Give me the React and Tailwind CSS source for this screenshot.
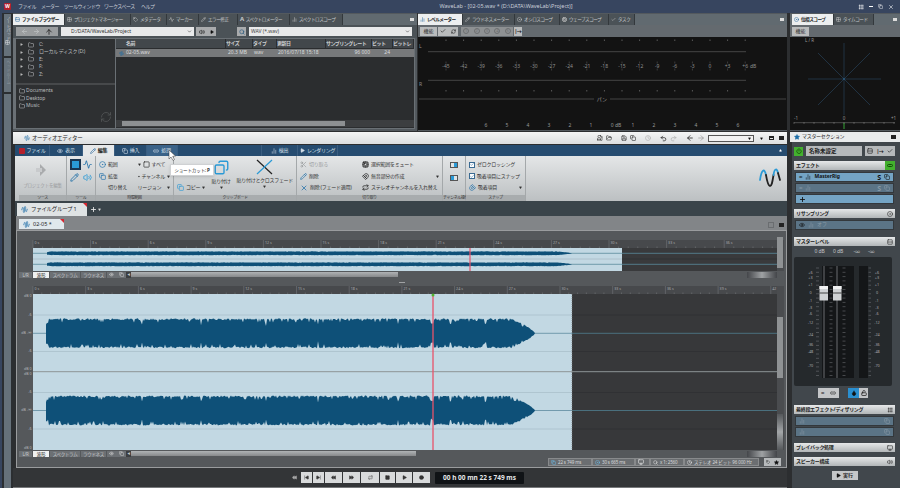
import React from 'react';
import {
  ArrowLeft, ArrowRight, ArrowUp, Folder, Volume2, Play, Search, ChevronDown, Undo2, Redo2, Plus, Star, Power,
  SkipBack, SkipForward, Rewind, FastForward, Square, Circle, Repeat, Copy, Scissors, X, Eye, Check, RefreshCw,
  Pencil, Monitor, Unlock, Grid2x2, BarChart2, FileAudio, Save, FolderOpen, Magnet, Tag, Activity, AudioWaveform,
  Clock, Cpu, Droplet, Link2, Rows2, ChartNoAxesColumn, Grip, CircleDot,
} from 'lucide-react';

// seeded noise so the waveforms stay the same on every load
const rng = (seed) => () => {
  seed = (seed * 16807) % 2147483647;
  return seed / 2147483647;
};

const makeWave = (cx, x0, x1, fadeAt, amp, seed, dips = []) => {
  const r = rng(seed);
  const top = [];
  const bottom = [];
  const edge = () => {
    const v = r();
    if (v < 0.12) return 0.7 + r() * 0.14;
    return 0.88 + r() * 0.12;
  };
  for (let x = x0; x <= x1; x += 1) {
    let env = x < x0 + 3 ? 0.75 : 1;
    if (x > fadeAt) env = Math.pow(1 - (x - fadeAt) / (x1 - fadeAt), 0.7);
    if (dips.includes(x)) env *= 0.66;
    top.push(`${x},${(cx - amp * env * edge()).toFixed(1)}`);
    bottom.unshift(`${x},${(cx + amp * env * edge()).toFixed(1)}`);
  }
  return `M${top.join(' L')} L${bottom.join(' L')} Z`;
};

const mainDips = [431, 432, 433, 450, 451, 485, 486, 142, 201, 266, 318, 398];
const mainTop = makeWave(333.3, 46, 535, 511, 15, 4711, mainDips);
const mainBottom = makeWave(410.5, 46, 535, 511, 15, 991, mainDips);
const overTop = makeWave(253.3, 47, 572, 556, 2, 77);
const overBottom = makeWave(264.3, 47, 572, 556, 2, 123);

const range = (n) => Array.from({ length: n }, (_, i) => i);

const Tab = ({ label, active, w, icon }) => (
  <div
    className={`flex items-center gap-[2px] h-[11px] px-[2px] text-[4.6px] tracking-[-0.5px] whitespace-nowrap border-r border-[#33383c] ${
      active ? 'bg-[#eceeef] text-[#222] font-bold' : 'bg-[#4b5257] text-[#c3c7ca]'
    } ${w}`}
  >
    {icon}
    <span>{label}</span>
  </div>
);

const Ic = ({ as: Icon, s = 6, c = 'text-[#333]', fill }) => (
  <Icon size={s} strokeWidth={2.2} className={`${c} shrink-0`} fill={fill || 'none'} />
);

const Menu = () => (
  <div className="h-[13px] flex items-center bg-[#37455f] text-[#c8ced8] text-[5px] shrink-0">
    <div className="ml-[4px] w-[7px] h-[7px] rounded-[1px] bg-[#b3202c] text-white text-[5px] leading-[7px] text-center font-bold">W</div>
    <div className="ml-[7px] flex gap-[6px] tracking-[-0.5px] whitespace-nowrap">
      <span className="w-[17px]">ファイル</span>
      <span className="w-[17px]">メーター</span>
      <span className="w-[34px]">ツールウィンドウ</span>
      <span className="w-[31px]">ワークスペース</span>
      <span>ヘルプ</span>
    </div>
    <span className="ml-[285px] text-[5.5px] whitespace-nowrap">WaveLab - [02-05.wav * (D:\DATA\WaveLab\Project)]</span>
    <div className="ml-auto mr-[6px] flex gap-[5px] items-center text-white">
      <Ic as={Grip} c="text-white" s={6} />
      <div className="w-[4px] h-[1px] bg-white" />
      <Ic as={Copy} c="text-white" s={5} />
      <Ic as={X} c="text-white" s={6} />
    </div>
  </div>
);

const LeftStrip = () => (
  <div className="w-[13px] shrink-0 flex flex-col bg-[#2b2e31] pl-[2px] pr-[2px] border-l-2 border-[#37455f]">
    <div className="h-[42px] mt-[1px] bg-[#66717a] flex flex-col items-center pt-[2px] text-[#c9ced2]">
      <span className="[writing-mode:vertical-rl] text-[4px] h-[24px] overflow-hidden">ノートパッド</span>
      <Ic as={Grid2x2} s={5} c="text-[#e4e6e8]" />
    </div>
    <div className="h-[34px] mt-[2px] bg-[#66717a] flex flex-col items-center pt-[2px] text-[#8b959c]">
      <span className="[writing-mode:vertical-rl] text-[4px] h-[24px] overflow-hidden">ヘッドルーム</span>
    </div>
    <div className="flex-1 mt-[2px] bg-[#66717a]" />
  </div>
);

const treeRows = ['C:', 'ローカル ディスク (D:)', 'E:', 'F:', 'Z:'];
const favRows = ['Documents', 'Desktop', 'Music'];
const cols = [
  ['名前', 'w-[110px] pl-[10px]'],
  ['サイズ', 'w-[27px]'],
  ['タイプ', 'w-[24px]'],
  ['更新日', 'w-[49px]'],
  ['サンプリングレート', 'w-[46px]'],
  ['ビット', 'w-[21px]'],
  ['ビットレ', 'w-[21px]'],
];

const FileBrowser = () => (
  <div className="w-[404px] shrink-0 flex flex-col bg-[#53595e]">
    <div className="flex h-[11px] mt-px bg-[#616a70] shrink-0">
      <Tab active w="w-[52px]" label="ファイルブラウザー" icon={<Ic as={Rows2} s={5} c="text-[#1d5f96]" />} />
      <Tab w="w-[66px]" label="プロジェクトマネージャー" icon={<Ic as={Grid2x2} s={5} c="text-[#ccc]" />} />
      <Tab w="w-[36px]" label="メタデータ" icon={<Ic as={Tag} s={5} c="text-[#ccc]" />} />
      <Tab w="w-[32px]" label="マーカー" icon={<Ic as={Activity} s={5} c="text-[#ccc]" />} />
      <Tab w="w-[39px]" label="エラー修正" icon={<Ic as={Pencil} s={5} c="text-[#ccc]" />} />
      <Tab w="w-[52px]" label="スペクトロメーター" icon={<span className="text-[6px] font-bold">A</span>} />
      <Tab w="w-[53px]" label="スペクトロスコープ" icon={<Ic as={ChartNoAxesColumn} s={5} c="text-[#ccc]" />} />
      <div className="flex-1 flex justify-end items-center pr-[3px]">
        <div className="w-[4px] h-[3px] bg-[#ddd]" />
      </div>
    </div>
    <div className="h-[13px] flex items-center bg-[#4b5257] pl-[3px] shrink-0">
      <div className="w-[42px] h-[9px] bg-[#9a9d9f] flex items-center justify-around px-[2px]">
        <Ic as={ArrowLeft} s={7} c="text-[#c4c6c8]" />
        <Ic as={ArrowRight} s={7} c="text-[#c4c6c8]" />
        <Ic as={ArrowUp} s={8} c="text-[#111]" />
      </div>
      <div className="ml-[3px] w-[133px] h-[9px] bg-[#e8e9ea] flex items-center pl-[10px] pr-[2px] text-[5px] text-[#333]">
        D:/DATA/WaveLab/Project
        <Ic as={ChevronDown} s={5} c="ml-auto text-[#111]" />
      </div>
      <div className="ml-[2px] w-[20px] h-[9px] bg-[#a9abad] flex items-center justify-around">
        <Ic as={Volume2} s={6} c="text-[#111]" />
        <Ic as={Play} s={4} c="text-[#111]" fill="#111" />
      </div>
      <div className="ml-[21px] w-[9px] h-[9px] bg-[#a9abad] flex items-center justify-center">
        <Ic as={Search} s={6} c="text-[#1a4e78]" />
      </div>
      <div className="ml-[3px] w-[163px] h-[9px] bg-[#e8e9ea] flex items-center pl-[2px] pr-[2px] text-[5px] text-[#444]">
        WAV (*.wav)
        <Ic as={ChevronDown} s={5} c="ml-auto text-[#111]" />
      </div>
    </div>
    <div className="flex-1 flex p-[1px] pl-[3px] bg-[#6a7075] gap-px mb-[2px] mr-[2px]">
      <div className="w-[100px] flex flex-col text-[5px] text-[#b9bcbe]">
        <div className="h-[44px] bg-[#2e3032] pt-[2px]">
          {treeRows.map((t) => (
            <div key={t} className="h-[7.4px] flex items-center pl-[4px] gap-[5px]">
              <Play size={3} fill="#bbb" className="text-[#bbb]" />
              <Ic as={Folder} s={6} c="text-[#b9bcbe]" />
              <span className="whitespace-nowrap tracking-[-0.3px]">{t}</span>
            </div>
          ))}
        </div>
        <div className="h-[2px] bg-[#47494b]" />
        <div className="flex-1 bg-[#2e3032] pt-[2px] relative">
          {favRows.map((t) => (
            <div key={t} className="h-[7.5px] flex items-center pl-[3px] gap-[1px]">
              <Ic as={Folder} s={6} c="text-[#b9bcbe]" />
              <span>{t}</span>
            </div>
          ))}
          <RefreshCw size={12} strokeWidth={1.5} className="absolute right-[3px] bottom-[5px] text-[#55585a]" />
        </div>
      </div>
      <div className="flex-1 flex flex-col bg-[#2b2d2f] text-[5px] text-[#cfd1d3]">
        <div className="h-[9px] flex bg-[#42474b] font-bold shrink-0 tracking-[-0.5px]">
          {cols.map(([c, w]) => (
            <div key={c} className={`${w} border-r border-[#2b2d2f] whitespace-nowrap flex items-center`}>{c}</div>
          ))}
        </div>
        <div className="h-[8px] mt-px flex items-center bg-[#77797b] shrink-0 text-[#dcdedf]">
          <div className="w-[110px] pl-[3px] flex items-center gap-[2px]">
            <Ic as={AudioWaveform} s={5} c="text-[#1e6ea8]" />
            02-05.wav
          </div>
          <div className="w-[27px] pl-[2px]">20.3 MB</div>
          <div className="w-[24px] pl-px">wav</div>
          <div className="w-[49px] pl-px whitespace-nowrap">2016/07/18 15:18</div>
          <div className="w-[44px] text-right">96 000</div>
          <div className="w-[20px] text-right">24</div>
        </div>
        <div className="flex-1" />
        <div className="h-[7px] mb-px flex items-center bg-[#3c3e40] px-[6px]">
          <div className="w-[223px] h-[5px] bg-[#8d9092]" />
        </div>
      </div>
    </div>
  </div>
);

const meterMarks = ['-45', '-42', '-39', '-36', '-33', '-30', '-27', '-24', '-21', '-18', '-15', '-12', '-9', '-6', '-3', '0', '+3', '+6'];
const panLeft = [[486, '6'], [507, '5'], [528, '4'], [549, '3'], [570, '2'], [591, '1'], [616, '0 dB'], [633, '1'], [654, '2'], [675, '3'], [696, '4'], [717, '5'], [738, '6']];

const LevelMeter = () => (
  <div className="w-[369px] shrink-0 ml-px flex flex-col bg-[#53595e]">
    <div className="flex h-[11px] mt-px bg-[#616a70] shrink-0">
      <Tab active w="w-[45px]" label="レベルメーター" icon={<Ic as={ChartNoAxesColumn} s={5} c="text-[#1d5f96]" />} />
      <Tab w="w-[52px]" label="ラウドネスメーター" icon={<Ic as={Pencil} s={5} c="text-[#ccc]" />} />
      <Tab w="w-[45px]" label="オシロスコープ" icon={<Ic as={CircleDot} s={5} c="text-[#ccc]" />} />
      <Tab w="w-[49px]" label="ウェーブスコープ" icon={<Ic as={Cpu} s={5} c="text-[#ccc]" />} />
      <Tab w="w-[26px]" label="タスク" icon={<Ic as={Check} s={5} c="text-[#ccc]" />} />
      <div className="flex-1 flex justify-end items-center pr-[3px]">
        <div className="w-[4px] h-[3px] bg-[#ddd]" />
      </div>
    </div>
    <div className="h-[12px] flex items-center bg-[#646a6f] pl-[2px] gap-px shrink-0">
      <div className="h-[9px] w-[17px] bg-[#b9bbbc] text-[#333] text-[5px] leading-[9px] text-center">機能</div>
      <div className="h-[9px] w-[20px] bg-[#b9bbbc] flex items-center justify-around">
        <Ic as={Check} s={6} c="text-[#111]" />
        <Ic as={RefreshCw} s={5} c="text-[#111]" />
      </div>
      <div className="ml-[2px] h-[9px] w-[52px] bg-[#8e9193] flex items-center justify-around text-[5px] text-[#6d6f71]">
        {['1', '2', '3', '4', '5'].map((n) => (
          <span key={n} className="w-[6px] h-[6px] rounded-full border border-[#6d6f71] flex items-center justify-center text-[4px]">{n}</span>
        ))}
      </div>
      <div className="h-[9px] w-[8px] bg-[#b9bbbc] flex items-center justify-center text-[#111] text-[5px] font-bold leading-none tracking-[-0.5px]">|→</div>
    </div>
    <svg viewBox="418 37 369 93" className="w-[369px] h-[93px] shrink-0 bg-[#131313]">
      {meterMarks.map((m, i) => {
        const x = 446 + i * 17.6;
        return (
          <g key={m}>
            <line x1={x} x2={x} y1="39.5" y2="41" stroke="#8a8a8a" strokeWidth="0.6" />
            <line x1={x} x2={x} y1="90" y2="91.5" stroke="#8a8a8a" strokeWidth="0.6" />
            <line x1={x} x2={x} y1="61.5" y2="63.5" stroke="#666" strokeWidth="0.5" />
            <line x1={x} x2={x} y1="68.5" y2="70.5" stroke="#666" strokeWidth="0.5" />
            <text x={x} y="67.5" textAnchor="middle" fontSize="5" fill="#8f8f8f">{m}</text>
          </g>
        );
      })}
      <text x="750" y="67.5" fontSize="5" fill="#8f8f8f">dB</text>
      <text x="419" y="48" fontSize="5" fill="#8f8f8f">L</text>
      <text x="419" y="86" fontSize="5" fill="#8f8f8f">R</text>
      <line x1="428" x2="746" y1="51.7" y2="51.7" stroke="#5a5a5a" strokeWidth="0.7" />
      <line x1="428" x2="746" y1="80.3" y2="80.3" stroke="#5a5a5a" strokeWidth="0.7" />
      <line x1="419" x2="594" y1="99" y2="99" stroke="#5a5a5a" strokeWidth="0.7" />
      <line x1="610" x2="786" y1="99" y2="99" stroke="#5a5a5a" strokeWidth="0.7" />
      <text x="602" y="101" textAnchor="middle" fontSize="5" fill="#9a9a9a">パン</text>
      {panLeft.map(([x, t]) => (
        <text key={x} x={x} y="127" textAnchor="middle" fontSize="5" fill="#9a9a9a">{t}</text>
      ))}
    </svg>
  </div>
);

const PhaseScope = () => (
  <div className="w-[110px] shrink-0 ml-[3px] flex flex-col bg-[#53595e]">
    <div className="flex h-[11px] mt-px bg-[#616a70] pl-[2px] shrink-0">
      <Tab active w="w-[42px]" label="位相スコープ" icon={<Ic as={CircleDot} s={5} c="text-[#1d5f96]" />} />
      <Tab w="w-[40px]" label="タイムコード" icon={<Ic as={Grid2x2} s={5} c="text-[#ccc]" />} />
      <div className="flex-1 flex justify-end items-center pr-[3px]">
        <div className="w-[4px] h-[3px] bg-[#ddd]" />
      </div>
    </div>
    <div className="h-[12px] flex items-center bg-[#646a6f] pl-[2px] shrink-0">
      <div className="h-[9px] w-[17px] bg-[#b9bbbc] text-[#333] text-[5px] leading-[9px] text-center">機能</div>
    </div>
    <svg viewBox="790 37 110 93" className="w-[110px] h-[93px] shrink-0 bg-[#131313]">
      <text x="805" y="42" fontSize="4.5" fill="#9a9a9a">L / R</text>
      <g stroke="#274058" strokeWidth="0.7">
        <line x1="844" x2="844" y1="43" y2="115" />
        <line x1="808" x2="881" y1="79" y2="79" />
        <line x1="818" x2="870" y1="53" y2="105" />
        <line x1="870" x2="818" y1="53" y2="105" />
      </g>
      <circle cx="844" cy="79" r="1" fill="#2a5a80" />
      <text x="794" y="120" fontSize="4.5" fill="#9a9a9a">-1</text>
      <text x="844" y="120" fontSize="4.5" fill="#9a9a9a" textAnchor="middle">0</text>
      <text x="891" y="120" fontSize="4.5" fill="#9a9a9a">+1</text>
      <line x1="794" x2="895" y1="122.7" y2="122.7" stroke="#777" strokeWidth="0.6" />
      {range(11).map((i) => (
        <line key={i} x1={794 + i * 10} x2={794 + i * 10} y1="122" y2="124" stroke="#888" strokeWidth="0.5" />
      ))}
      <line x1="844" x2="844" y1="123" y2="129" stroke="#3ab53a" strokeWidth="0.9" />
    </svg>
  </div>
);

const RibbonTab = ({ icon, label, active, hover, w }) => (
  <div
    className={`h-[11px] flex items-center justify-center gap-[2px] text-[5px] tracking-[-0.3px] whitespace-nowrap border-r border-[#3a5d80] ${w} ${
      active ? 'bg-[#e6e8e9] text-[#222] font-bold' : hover ? 'bg-[#3a6288] text-[#d6e0ea]' : 'text-[#d6e0ea]'
    }`}
  >
    {icon}
    {label}
  </div>
);

const Row = ({ icon, label, className = '', arrow }) => (
  <div className={`h-[11.5px] flex items-center gap-[2px] text-[5px] tracking-[-0.25px] whitespace-nowrap ${className}`}>
    {icon}
    {label}
    {arrow && <Ic as={Play} s={3} c="ml-auto rotate-90 text-[#333]" fill="#333" />}
  </div>
);

const Group = ({ w, label, children, className = '' }) => (
  <div className={`${w} shrink-0 flex flex-col border-r border-[#a4a8aa]`}>
    <div className={`flex-1 pt-[3px] px-[3px] ${className}`}>{children}</div>
    <div className="h-[6px] bg-[#a8acae] text-[#333] text-[4px] tracking-[-0.4px] whitespace-nowrap leading-[6px] text-center">{label}</div>
  </div>
);

const TitleIcons = () => (
  <div className="ml-auto mr-[3px] flex items-center gap-[3px]">
    <Ic as={FileAudio} s={6} c="text-[#222]" />
    <Ic as={FolderOpen} s={6} c="text-[#222]" />
    <div className="w-[3px]" />
    <Ic as={Save} s={6} c="text-[#222]" />
    <Ic as={Copy} s={6} c="text-[#222]" />
    <div className="w-[3px]" />
    <Ic as={Clock} s={6} c="text-[#aaa]" />
    <div className="w-[3px]" />
    <Ic as={Undo2} s={7} c="text-[#111]" />
    <Ic as={Redo2} s={7} c="text-[#aaa]" />
    <div className="w-[3px]" />
    <Ic as={ArrowLeft} s={8} c="text-[#111]" />
    <Ic as={ArrowRight} s={8} c="text-[#999]" />
    <div className="w-[46px] h-[7px] bg-[#f2f2f2] border border-[#555] flex justify-end items-center pr-[2px]">
      <Play size={3} fill="#111" className="rotate-90 text-[#111]" />
    </div>
    <Play size={3} fill="#111" className="mx-[3px] rotate-90 text-[#111]" />
    <div className="w-[5px] h-[4px] border border-[#222] border-t-2" />
    <div className="ml-[2px] w-[5px] h-[4px] bg-[#222]" />
  </div>
);

const Ribbon = () => (
  <div className="h-[45px] flex bg-gradient-to-b from-[#e4e6e7] to-[#bcc0c2] text-[#333] relative shrink-0">
    <div className="w-[4px] shrink-0" />
    <Group w="w-[48px]" label="ソース" className="flex flex-col items-center text-[#9a9c9e]">
      <svg width="16" height="14" viewBox="0 0 16 14" className="mt-[4px]">
        <path d="M5 1 L11 7 L5 13 Z" fill="#a9abad" />
        <path d="M1 5 H7 V9 H1 Z" fill="#c8cacc" />
      </svg>
      <span className="mt-[5px] text-[4.5px] tracking-[-0.2px] whitespace-nowrap">プロジェクトを編集</span>
    </Group>
    <Group w="w-[29px]" label="ツール" className="grid grid-cols-2 gap-[1px] content-start">
      <div className="w-[11px] h-[11px] bg-[#2a9ad6] border-[2px] border-[#1a3550]" />
      <Ic as={Activity} s={9} c="text-[#1d6ea8] ml-[1px] mt-px" />
      <Ic as={Pencil} s={9} c="text-[#1d6ea8] mt-[2px]" />
      <Ic as={Volume2} s={9} c="text-[#2a9ad6] ml-[1px] mt-[2px]" />
    </Group>
    <Group w="w-[78px]" label="時間範囲" className="grid grid-cols-2 gap-x-[6px] content-start">
      <Row icon={<Ic as={CircleDot} s={7} c="text-[#1d6ea8]" />} label="範囲" />
      <Row icon={<><Play size={3} fill="#333" className="rotate-90" /><Ic as={Square} s={7} c="text-[#222]" /></>} label="すべて" />
      <Row icon={<Ic as={Copy} s={7} c="text-[#1d6ea8]" />} label="拡張" />
      <Row icon={<Play size={3} fill="#333" className="rotate-90" />} label="チャンネル" arrow />
      <Row label="切り替え" className="pl-[9px]" />
      <Row label="リージョン" arrow />
    </Group>
    <Group w="w-[123px]" label="クリップボード" className="flex gap-[4px]">
      <div className="w-[38px] pt-[23px]">
        <Row icon={<Ic as={Copy} s={7} c="text-[#2a9ad6]" />} label="コピー" arrow />
      </div>
      <div className="w-[31px] flex flex-col items-center">
        <Ic as={Copy} s={15} c="text-[#2a9ad6] mt-[1px] -scale-x-100" />
        <span className="mt-[3px] text-[5px] tracking-[-0.3px] whitespace-nowrap">貼り付け</span>
        <Play size={3} fill="#333" className="rotate-90" />
      </div>
      <div className="flex-1 flex flex-col items-center">
        <svg width="17" height="16" viewBox="0 0 17 16">
          <line x1="1" y1="1" x2="16" y2="15" stroke="#222" strokeWidth="1.2" />
          <line x1="16" y1="1" x2="1" y2="15" stroke="#2a9ad6" strokeWidth="1.2" />
        </svg>
        <span className="mt-[2px] text-[5px] tracking-[-0.3px] whitespace-nowrap">貼り付けとクロスフェード</span>
        <Play size={3} fill="#333" className="rotate-90" />
      </div>
    </Group>
    <Group w="w-[146px]" label="切り取り" className="grid grid-cols-[62px_1fr] content-start">
      <Row className="text-[#9a9c9e]" icon={<Ic as={Scissors} s={7} c="text-[#9a9c9e]" />} label="切り取る" />
      <Row icon={<Ic as={Cpu} s={7} c="text-[#111]" />} label="選択範囲をミュート" />
      <Row icon={<Ic as={Pencil} s={7} c="text-[#1d6ea8]" />} label="削除" />
      <Row icon={<Ic as={Magnet} s={7} c="text-[#111]" />} label="無音部分の作成" arrow />
      <Row icon={<Ic as={X} s={8} c="text-[#1d6ea8]" />} label="削除 (フェード適用)" />
      <Row icon={<Ic as={Repeat} s={7} c="text-[#111]" />} label="ステレオチャンネルを入れ替え" />
    </Group>
    <Group w="w-[23px]" label="チャンネル操作" className="flex flex-col items-center gap-[7px] pt-[6px]">
      <div className="w-[8px] h-[6px] border border-[#555] bg-[#dfe3e5]"><div className="w-[3px] h-[4px] ml-auto bg-[#2a9ad6]" /></div>
      <div className="w-[8px] h-[6px] border border-[#555] bg-[#dfe3e5]"><div className="w-[3px] h-[4px] bg-[#2a9ad6]" /></div>
    </Group>
    <Group w="w-[60px]" label="スナップ">
      {['ゼロクロッシング', '吸着項目にスナップ'].map((t) => (
        <Row
          key={t}
          icon={
            <span className="w-[6px] h-[6px] border border-[#3a6a92] bg-white flex items-center justify-center">
              <Check size={5} strokeWidth={3} className="text-[#1d5f96]" />
            </span>
          }
          label={t}
        />
      ))}
      <Row icon={<Ic as={Magnet} s={7} c="text-[#1d6ea8] rotate-180" />} label="吸着項目" arrow />
    </Group>
    <div className="flex-1 flex justify-end items-start pr-[6px] pt-[11px]">
      <svg width="22" height="20" viewBox="0 0 22 20" fill="none" strokeWidth="1.8" strokeLinecap="round">
        <path d="M1 13 C2.5 2 5.5 1 7 8" stroke="#2a9ad6" />
        <path d="M7 8 C8 14 9 19 11 19 C13 19 13.5 14 14.5 8" stroke="#222" />
        <path d="M14.5 8 C15.5 1 18 1 19 6" stroke="#2a9ad6" />
        <path d="M19 6 L21 13" stroke="#222" />
      </svg>
    </div>
    {/* tooltip and mouse pointer lie over the ribbon */}
    <div className="absolute left-[155px] top-[8px] w-[44px] h-[12px] bg-white border border-[#cfd1d3] text-[4.6px] tracking-[-0.2px] text-[#333] flex items-center justify-center shadow-sm whitespace-nowrap">
      ショートカット:&nbsp;<b>P</b>
    </div>
  </div>
);

const Ruler = ({ y, step, max, h = 8, from = 0 }) => (
  <g>
    <rect x="33" y={y} width="744" height={h} fill="#47494c" />
    {range(max).map((i) => {
      const x = 33 + i * step;
      if (x > 777) return null;
      return (
        <g key={i}>
          <line x1={x} x2={x} y1={y} y2={y + h} stroke="#7b7d80" strokeWidth="0.5" />
          <text x={x + 1.5} y={y + 4} fontSize="3.6" fill="#a9abad">{`${from + i * 3} s`}</text>
          {range(5).map((k) => (
            <line key={k} x1={x + ((k + 1) * step) / 6} x2={x + ((k + 1) * step) / 6} y1={y + h - 1.5} y2={y + h} stroke="#8b8d90" strokeWidth="0.4" />
          ))}
        </g>
      );
    })}
  </g>
);

const OverviewWave = () => (
  <svg viewBox="17 240 760 31" className="w-[760px] h-[31px] block">
    <rect x="17" y="240" width="760" height="31" fill="#55585b" />
    <Ruler y={240} step={57.6} max={14} />
    <rect x="33" y="248" width="589" height="23" fill="#c2d8e3" />
    <rect x="622" y="248" width="155" height="23" fill="#393a3c" />
    <line x1="622" x2="777" y1="259" y2="259" stroke="#313234" strokeWidth="1" />
    <line x1="33" x2="622" y1="259" y2="259" stroke="#a9bcc6" strokeWidth="0.8" />
    <line x1="33" x2="777" y1="253.3" y2="253.3" stroke="#5a8a9c" strokeWidth="0.8" />
    <line x1="33" x2="777" y1="264.3" y2="264.3" stroke="#5a8a9c" strokeWidth="0.8" />
    <path d={overTop} fill="#0e5078" />
    <path d={overBottom} fill="#0e5078" />
    <line x1="470" x2="470" y1="248" y2="271" stroke="#e8536a" strokeWidth="1.2" />
  </svg>
);

const dbLabels = [
  [297, 'dB 0'], [315.5, '-6'], [334, 'dB -∞'], [352, '-6'], [370, 'dB 0'], [374.5, 'dB 0'], [393, '-6'], [411, 'dB -∞'], [429.5, '-6'], [448.5, 'dB 0'],
];

const MainWave = () => (
  <svg viewBox="17 286 760 164" className="w-[760px] h-[164px] block">
    <rect x="17" y="286" width="760" height="164" fill="#55585b" />
    <Ruler y={286} step={52.7} max={16} />
    <rect x="33" y="294" width="539" height="156" fill="#c2d8e3" />
    <rect x="572" y="294" width="205" height="156" fill="#37383a" />
    {[315, 351.5, 392.5, 429].map((y) => (
      <g key={y}>
        <line x1="33" x2="572" y1={y} y2={y} stroke="#a9c0cc" strokeWidth="0.8" />
        <line x1="572" x2="777" y1={y} y2={y} stroke="#2f3032" strokeWidth="0.8" />
      </g>
    ))}
    <line x1="33" x2="777" y1="371.7" y2="371.7" stroke="#8d9496" strokeWidth="1" />
    <line x1="33" x2="572" y1="333.3" y2="333.3" stroke="#5d8aa0" strokeWidth="0.8" />
    <line x1="33" x2="572" y1="410.5" y2="410.5" stroke="#5d8aa0" strokeWidth="0.8" />
    <line x1="572" x2="777" y1="333.3" y2="333.3" stroke="#4f7f8f" strokeWidth="0.8" />
    <line x1="572" x2="777" y1="410.5" y2="410.5" stroke="#4f7f8f" strokeWidth="0.8" />
    <path d={mainTop} fill="#0e5078" />
    <path d={mainBottom} fill="#0e5078" />
    <line x1="572" x2="572" y1="294" y2="450" stroke="#777" strokeWidth="0.6" strokeDasharray="1 1" />
    <line x1="433" x2="433" y1="294" y2="450" stroke="#e8536a" strokeWidth="1.3" />
    <circle cx="433" cy="295" r="1.5" fill="#4fb52e" />
    {dbLabels.map(([y, t]) => (
      <text key={y} x="31.5" y={y} textAnchor="end" fontSize="3.6" fill="#b4b6b8">{t}</text>
    ))}
  </svg>
);

// vertical strip to the right of each wave display
const VScroll = ({ thumbTop, thumbH, grip }) => (
  <div className="w-[7px] shrink-0 bg-[#4a4c4f] flex flex-col">
    <div className={`w-[6px] bg-[#8f9294] ${thumbTop} ${thumbH}`} />
    {grip && (
      <div className="mt-auto h-[36px] w-[6px] bg-gradient-to-b from-[#55585b] via-[#a4a7a9] to-[#55585b]" />
    )}
  </div>
);

const ViewBar = ({ thumbW }) => (
  <div className="h-[7px] flex items-center text-[4.5px] tracking-[-0.3px] text-[#c8cacc] shrink-0">
    <div className="w-[2px]" />
    <div className="w-[13px] h-[6px] bg-[#6c7074] text-center leading-[6px]">L/R</div>
    <div className="w-[16px] h-[6px] ml-px bg-[#f0f1f1] text-[#222] text-center leading-[6px]">波形</div>
    <div className="w-[30px] h-[6px] ml-px bg-[#6c7074] text-center leading-[6px] whitespace-nowrap">スペクトラム</div>
    <div className="w-[25px] h-[6px] ml-px bg-[#6c7074] text-center leading-[6px] whitespace-nowrap">ラウドネス</div>
    <div className="w-[19px] h-[6px] ml-px bg-[#6c7074] flex items-center justify-around">
      <Ic as={Eye} s={5} c="text-[#ddd]" />
      <Ic as={Copy} s={5} c="text-[#ddd]" />
    </div>
    <div className="w-[5px] h-[6px] bg-[#3d3f41] text-center leading-[6px] text-[3px]">◀</div>
    <div className={`h-[5px] bg-gradient-to-b from-[#b0b3b5] to-[#87898b] ${thumbW}`} />
    <div className="ml-auto w-[30px] h-[6px] mr-[9px] bg-gradient-to-r from-[#44464a] via-[#9fa2a4] to-[#44464a]" />
  </div>
);

const statusCells = [
  ['w-[44px]', '22 s 749 ms', <Ic key="a" as={Copy} s={5} c="text-[#6cc0f0]" />],
  ['w-[43px]', '30 s 665 ms', <Ic key="b" as={CircleDot} s={5} c="text-[#6cc0f0]" />],
  ['w-[15px]', '', <Ic key="c" as={Monitor} s={6} c="text-[#eee]" />],
  ['w-[34px]', 'x 1: 2560', <Ic key="d" as={Search} s={5} c="text-[#eee]" />],
  ['w-[75px]', 'ステレオ 24 ビット 96 000 Hz', <Ic key="e" as={Clock} s={5} c="text-[#eee]" />],
];

const StatusBar = () => (
  <div className="h-[10px] flex items-center justify-end pr-[5px] shrink-0">
    {statusCells.map(([w, t, icon]) => (
      <div key={t + w} className={`${w} h-[8px] border border-[#888a8c] bg-[#6b6e71] flex items-center gap-[2px] px-[2px] text-[4.5px] tracking-[-0.15px] text-[#d6d8da] whitespace-nowrap`}>
        {icon}
        {t}
      </div>
    ))}
    <div className="ml-[5px] w-[17px] h-[8px] bg-[#b6b9bb] flex items-center justify-around">
      <Ic as={Tag} s={4} c="text-[#111]" />
      <Star size={5} fill="#111" className="text-[#111]" />
    </div>
  </div>
);

const transportBtns = [
  [SkipBack, 'w-[11px]'], [SkipForward, 'w-[11px]'], [Rewind, 'w-[17px]'], [FastForward, 'w-[17px]'], [Repeat, 'w-[18px]'], [Square, 'w-[15px]'], [Play, 'w-[16px]'], [Circle, 'w-[17px]'],
];

const Transport = () => (
  <div className="h-[20px] flex items-center bg-[#333537] shrink-0 border-b border-[#77797b]">
    <Ic as={Rewind} s={5} c="ml-[279px] text-[#aaa]" fill="#aaa" />
    <div className="ml-[4px] flex gap-px">
      {transportBtns.map(([I, w], i) => (
        <div key={i} className={`${w} h-[11px] bg-[#d8dadb] flex items-center justify-center`}>
          <I size={5} fill={I === Repeat ? 'none' : '#333'} className="text-[#333]" />
        </div>
      ))}
    </div>
    <div className="ml-[5px] w-[89px] h-[12px] bg-[#101316] rounded-[1px] text-[#e6e8ea] text-[6.5px] font-bold flex items-center justify-center whitespace-nowrap">
      00 h 00 mn 22 s 749 ms
    </div>
  </div>
);

const Editor = () => (
  <div className="w-[774px] shrink-0 flex flex-col bg-[#2c2e30]">
    <div className="h-[12px] mt-px flex items-center pl-[11px] gap-[2px] bg-gradient-to-b from-[#f4f5f5] to-[#dcdfe0] text-[5.5px] tracking-[-0.4px] text-[#2a2a2a] shrink-0">
      <Ic as={AudioWaveform} s={6} c="text-[#1d6ea8]" />
      オーディオエディター
      <TitleIcons />
    </div>
    <div className="h-[1px] shrink-0" />
    <div className="h-[11px] ml-[2px] flex bg-[#264c70] shrink-0 relative">
      <RibbonTab w="w-[35px]" label="ファイル" icon={<span className="w-[6px] h-[6px] bg-[#b3202c] rounded-[1px]" />} />
      <RibbonTab w="w-[33px]" label="表示" icon={<Ic as={Eye} s={6} c="text-[#d6e0ea]" />} />
      <RibbonTab w="w-[32px]" active label="編集" icon={<Ic as={Pencil} s={6} c="text-[#1d5f96]" />} />
      <RibbonTab w="w-[32px]" label="挿入" icon={<Ic as={Copy} s={6} c="text-[#d6e0ea]" />} />
      <RibbonTab w="w-[31px]" hover label="処理" icon={<Ic as={Link2} s={6} c="text-[#d6e0ea]" />} />
      <div className="w-[84px] border-r border-[#3a5d80]" />
      <RibbonTab w="w-[36px]" label="検出" icon={<Ic as={BarChart2} s={6} c="text-[#d6e0ea]" />} />
      <RibbonTab w="w-[40px]" label="レンダリング" icon={<Ic as={Play} s={5} c="text-[#d6e0ea]" fill="#d6e0ea" />} />
      <Play size={3} fill="#fff" className="absolute right-[5px] top-[4px] -rotate-90 text-white" />
      <svg width="9" height="11" viewBox="0 0 9 11" className="absolute left-[153px] top-[5px] z-10">
        <path d="M1 0 L1 9 L3 7 L5 10.5 L6.5 9.5 L4.7 6.4 L7.5 6 Z" fill="#fff" stroke="#333" strokeWidth="0.5" />
      </svg>
    </div>
    <div className="ml-[2px]">
      <Ribbon />
    </div>
    <div className="h-[15px] ml-[2px] flex items-end bg-[#3a444a] pl-[2px] shrink-0">
      <div className="w-[70px] h-[13px] bg-[#dfe3e4] flex items-center gap-[3px] pl-[4px] text-[5.5px] text-[#222] relative whitespace-nowrap">
        <Ic as={AudioWaveform} s={7} c="text-[#1d6ea8]" />
        <span className="tracking-[-0.3px]">ファイルグループ 1</span>
        <div className="absolute right-0 top-0 border-t-[4px] border-l-[4px] border-t-[#d8252f] border-l-transparent" />
      </div>
      <div className="ml-[3px] h-[13px] flex items-center gap-[1px] text-[#e8e8e8]">
        <Plus size={7} strokeWidth={3} />
        <Play size={3} fill="#ddd" className="rotate-90" />
      </div>
    </div>
    <div className="flex-1 ml-[3px] flex flex-col bg-[#828588]">
      <div className="h-[14px] flex items-end pl-[3px] shrink-0 relative">
        <div className="w-[45px] h-[10px] mb-px bg-[#e0e8ec] flex items-center gap-[3px] pl-[4px] text-[5.5px] text-[#222] relative">
          <Ic as={AudioWaveform} s={7} c="text-[#1d6ea8]" />
          02-05 *
          <div className="absolute right-0 top-0 border-t-[4px] border-l-[4px] border-t-[#d8252f] border-l-transparent" />
        </div>
        <div className="ml-auto mr-[3px] mb-[2px] flex gap-[5px] items-center">
          <div className="w-[6px] h-[6px] border border-[#6a6d70]" />
          <div className="w-[5px] h-[4px] bg-[#222]" />
        </div>
      </div>
      <div className="flex-1 bg-[#55585b] border border-[#9a9c9e] flex flex-col overflow-hidden">
        <div className="h-[9px] shrink-0" />
        <div className="flex shrink-0">
          <OverviewWave />
          <VScroll thumbTop="mt-[-3px]" thumbH="h-[31px]" />
        </div>
        <ViewBar thumbW="w-[267px]" />
        <div className="h-[8px] shrink-0 flex items-center justify-center">
          <div className="w-[6px] h-px bg-[#a0a2a4]" />
        </div>
        <div className="flex shrink-0">
          <MainWave />
          <VScroll thumbTop="mt-[31px]" thumbH="h-[61px]" grip />
        </div>
        <ViewBar thumbW="w-[285px]" />
        <StatusBar />
      </div>
    </div>
    <Transport />
  </div>
);

const SectionHead = ({ label, right, className = '' }) => (
  <div className={`h-[9px] flex items-center justify-between pl-[2px] bg-gradient-to-b from-[#e6e8e9] to-[#b2b6b8] text-[5px] tracking-[-0.3px] whitespace-nowrap font-bold text-[#222] shrink-0 ${className}`}>
    {label}
    {right}
  </div>
);

const Slot = ({ label, on, empty, plus, h = 'h-[10px]', className = '' }) => (
  <div className={`${h} mx-px flex items-center gap-[3px] px-[3px] border border-[#33383c] text-[5px] font-bold shrink-0 ${on ? 'bg-[#74a4c4] text-[#111]' : 'bg-[#5b7486] text-[#8799a5]'} ${className}`}>
    {plus ? (
      <Plus size={7} strokeWidth={3} className="text-[#111]" />
    ) : (
      <>
        {!empty && <span className="text-[6px] leading-none">=</span>}
        <Ic as={ChartNoAxesColumn} s={6} c={on ? 'text-[#111]' : 'text-[#8799a5]'} />
        {label}
        {!empty && <span className="ml-auto text-[7px] leading-none">S</span>}
        <Ic as={Copy} s={6} c={`${empty ? 'ml-auto ' : ''}${on ? 'text-[#111]' : 'text-[#8799a5]'}`} />
      </>
    )}
  </div>
);

const scale = [
  [275, '+6'], [280, '+3'], [287, '+1'], [295, '0'], [303, '-1'], [310, '-3'], [316, '-6'], [325, '-12'], [337, '-24'], [347, '-36'], [354, '-48'], [368, '-70'],
];

const Faders = () => (
  <svg viewBox="795 259 98 129" className="w-[98px] h-[129px] shrink-0 rounded-[2px] bg-[#25292c]">
    <rect x="823" y="268" width="32" height="112" fill="#141618" />
    <rect x="860" y="268" width="9" height="112" fill="#141618" />
    <rect x="824.5" y="268" width="1" height="112" fill="#6a6d70" />
    <rect x="837.5" y="268" width="1" height="112" fill="#6a6d70" />
    {range(26).map((i) => {
      const y = 270 + i * 4.3;
      return (
        <g key={i} stroke="#7a7d80" strokeWidth="0.5">
          <line x1="817" x2="820" y1={y} y2={y} />
          <line x1="830.5" x2="833.5" y1={y} y2={y} />
          <line x1="843.5" x2="846.5" y1={y} y2={y} />
          <line x1="869.5" x2="872" y1={y} y2={y} />
        </g>
      );
    })}
    {scale.map(([y, t]) => (
      <g key={t} fontSize="3.8" fill="#a6a8aa" textAnchor="middle">
        <text x="811.5" y={y + 1.3}>{t}</text>
        <text x="878" y={y + 1.3}>{t}</text>
      </g>
    ))}
    {[820.5, 834].map((x) => (
      <g key={x}>
        <rect x={x} y="288" width="8.5" height="14.5" rx="0.5" fill="#cfd2d4" />
        <rect x={x} y="294.6" width="8.5" height="0.8" fill="#222" />
        <rect x={x} y="288" width="8.5" height="3" fill="#f0f1f2" />
      </g>
    ))}
  </svg>
);

const Master = () => (
  <div className="w-[110px] ml-[3px] shrink-0 flex flex-col bg-[#2c2e30]">
    <div className="h-[10px] mt-px flex items-center pl-[4px] gap-[2px] bg-[#e9ebec] text-[5px] tracking-[-0.3px] text-[#222] shrink-0">
      <Star size={6} fill="#1d6ea8" className="text-[#1d6ea8]" />
      マスターセクション
      <div className="ml-auto mr-[4px] w-[5px] h-[4px] bg-[#222]" />
    </div>
    <div className="flex-1 ml-[2px] flex flex-col bg-[#41474c] pl-[2px] pr-[5px]">
      <div className="h-[10px] mt-[4px] flex items-center shrink-0 gap-[3px]">
        <div className="w-[9px] h-[9px] bg-[#43b02e] flex items-center justify-center">
          <Power size={6} strokeWidth={3} className="text-[#114d06]" />
        </div>
        <div className="w-[56px] h-[10px] bg-[#b6b9bb] text-[5.5px] text-[#222] font-bold pl-[3px] leading-[10px]">名称未設定</div>
        <div className="flex-1 h-[10px] bg-[#b6b9bb] flex items-center justify-around">
          <Ic as={Rows2} s={6} c="text-[#111]" />
          <span className="text-[5px] font-bold leading-none tracking-[-0.5px] text-[#111]">|→</span>
          <Ic as={Check} s={6} c="text-[#111]" />
        </div>
      </div>
      <SectionHead
        className="mt-[5px]"
        label="エフェクト"
        right={
          <div className="w-[10px] h-[9px] bg-[#43b02e] flex items-center justify-center">
            <div className="w-[6px] h-[3px] rounded-full border border-[#114d06]" />
          </div>
        }
      />
      <Slot className="mt-[2px]" h="h-[10px]" on label="MasterRig" />
      <Slot className="mt-px" h="h-[10px]" label="" />
      <Slot className="mt-[1px]" h="h-[10px]" on plus />
      <SectionHead className="mt-[5px]" label="リサンプリング" right={<Ic as={CircleDot} s={6} c="text-[#222] mr-[2px]" />} />
      <div className="h-[10px] mt-[2px] mx-px flex items-center gap-[3px] px-[3px] bg-[#5b7486] border border-[#33383c] text-[5px] text-[#8799a5] shrink-0">
        <Ic as={Eye} s={6} c="text-[#111]" />
        <Ic as={ChartNoAxesColumn} s={6} c="text-[#8799a5]" />
        オフ
      </div>
      <SectionHead
        className="mt-[7px]"
        label="マスターレベル"
        right={<Ic as={Rows2} s={6} c="text-[#222] mr-[2px]" />}
      />
      <div className="h-[11px] flex items-center justify-center gap-[8px] text-[5px] text-[#c4c6c8] shrink-0">
        <span>0 dB</span>
        <span>0 dB</span>
        <span className="ml-[2px]">-∞</span>
        <span>-∞</span>
      </div>
      <Faders />
      <div className="h-[10px] mt-[2px] flex items-center shrink-0 pl-[24px]">
        <div className="w-[21px] h-[10px] bg-[#c4c6c8] flex items-center justify-around text-[6px] font-bold text-[#222]">
          =
          <Ic as={Link2} s={6} c="text-[#222]" />
        </div>
        <div className="ml-[9px] w-[11px] h-[10px] bg-[#2a8fd0] flex items-center justify-center">
          <Droplet size={6} fill="#111" className="text-[#111]" />
        </div>
        <div className="w-[9px] h-[10px] bg-[#c4c6c8] flex items-center justify-center">
          <Unlock size={6} strokeWidth={3} className="text-[#222]" />
        </div>
      </div>
      <SectionHead className="mt-[7px]" label="最終段エフェクト/ディザリング" right={<Grip size={6} className="text-[#222] mr-[2px]" />} />
      <Slot className="mt-[2px]" empty label="" />
      <Slot className="mt-px" empty label="" />
      <SectionHead className="mt-[6px]" label="プレイバック処理" right={<Ic as={Monitor} s={6} c="text-[#222] mr-[2px]" />} />
      <SectionHead className="mt-[5px]" label="スピーカー構成" right={<Ic as={Volume2} s={6} c="text-[#222] mr-[2px]" />} />
      <div className="mt-[5px] mx-auto w-[26px] h-[9px] bg-[#c4c6c8] flex items-center justify-center gap-[2px] text-[5px] text-[#222] font-bold shrink-0">
        <Play size={5} fill="#111" className="text-[#111]" />
        実行
      </div>
    </div>
  </div>
);

export default function App() {
  return (
    <div className="w-[900px] h-[488px] overflow-hidden flex flex-col bg-[#2c2e30] font-['Noto_Sans','Noto_Sans_CJK_JP',sans-serif]">
      <Menu />
      <div className="flex-1 flex min-h-0">
        <LeftStrip />
        <div className="flex-1 flex flex-col min-w-0">
          <div className="h-[118px] flex shrink-0">
            <FileBrowser />
            <LevelMeter />
            <PhaseScope />
          </div>
          <div className="flex-1 flex min-h-0">
            <Editor />
            <Master />
          </div>
        </div>
      </div>
    </div>
  );
}
